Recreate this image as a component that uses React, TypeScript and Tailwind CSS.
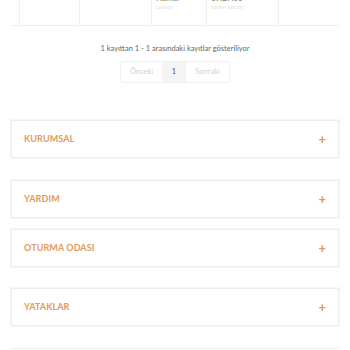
import React from "react";

const font = { fontFamily: "Lato, 'Noto Sans', sans-serif" };

function Acc({ title, className }: { title: string; className?: string }) {
  return (
    <div
      className={
        "mx-[11px] h-[38px] flex items-center justify-between pl-[12px] pr-[12px] border border-[#ededed] shadow-[0_0_0_1px_#f7f7f7] bg-white " +
        (className || "")
      }
    >
      <span className="text-[9px] font-bold text-[#e29a5c] tracking-[0.1px]">{title}</span>
      <span className="text-[13px] font-bold text-[#e29a5c] leading-none">+</span>
    </div>
  );
}

export default function App() {
  return (
    <div className="w-[350px] h-[350px] bg-white overflow-hidden relative" style={font}>
      {/* table remnant */}
      <div className="mx-[11px] h-[26px] border-b border-[#eeeeee] flex overflow-hidden">
        <div className="w-[8px]" />
        <div className="w-[60px] border-l border-[#eeeeee]" />
        <div className="w-[72px] border-l border-[#eeeeee]" />
        <div className="w-[55px] border-l border-[#eeeeee] pl-[4px] -mt-[7px] text-[8px] leading-[10px] text-[#777]">
          <div>Hamur</div>
          <div className="text-[#e2e2e2] text-[6px] leading-[7px]">Lorem</div>
        </div>
        <div className="w-[72px] border-l border-[#eeeeee] pl-[4px] -mt-[7px] text-[8px] leading-[10px] text-[#777]">
          <div>17.27.00</div>
          <div className="text-[#e2e2e2] text-[6px] leading-[7px]">lorem ipsum</div>
        </div>
        <div className="flex-1 border-l border-[#eeeeee]" />
      </div>

      <div className="mt-[18px] text-center text-[7.5px] text-[#666] leading-[10px]">
        1 kayıttan 1 - 1 arasındaki kayıtlar gösteriliyor
      </div>

      <div className="mt-[7px] flex justify-center">
        <div className="flex h-[22px] border border-[#f0f0f0] rounded-[2px] text-[7.5px]">
          <div className="w-[41px] flex items-center justify-center text-[#d0d0d0]">Önceki</div>
          <div className="w-[24px] flex items-center justify-center bg-[#f5f5f5] text-[#555]">1</div>
          <div className="w-[43px] flex items-center justify-center text-[#d0d0d0]">Sonraki</div>
        </div>
      </div>

      <Acc title="KURUMSAL" className="mt-[37px]" />
      <Acc title="YARDIM" className="mt-[22px]" />
      <Acc title="OTURMA ODASI" className="mt-[11px]" />
      <Acc title="YATAKLAR" className="mt-[21px]" />

      <div className="mx-[11px] mt-[22px] border-t border-[#eeeeee]" />
    </div>
  );
}
